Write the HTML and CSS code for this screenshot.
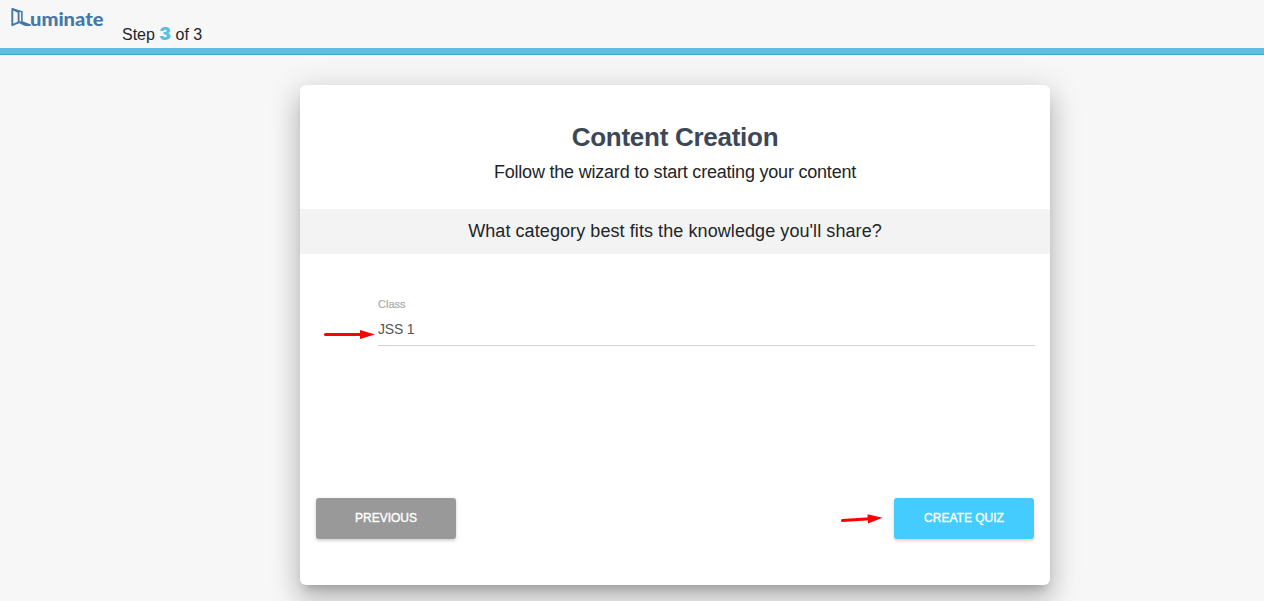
FILE: index.html
```html
<!DOCTYPE html>
<html lang="en">
<head>
<meta charset="utf-8">
<title>Content Creation</title>
<link rel="stylesheet" href="styles.css">
</head>
<body>
<header class="topbar">
  <svg class="logo" width="104" height="36" viewBox="0 0 104 36" role="img" aria-label="Luminate">
    <g fill="none" stroke="#4478a8" stroke-linejoin="round">
      <path stroke-width="1.9" d="M12.3 8.9V25.2L18.6 22.4V12.2Z"/>
      <path stroke-width="1.6" d="M12.4 8.9L21.9 11.7V22"/>
      <path stroke-width="1.9" d="M18.6 22.2L24 22.8L30 25.1H25.5L20.5 22.8"/>
    </g>
    <text class="logo-text" x="30" y="26" textLength="73.5" lengthAdjust="spacingAndGlyphs">uminate</text>
  </svg>
  <p class="step">Step <strong class="step-number">3</strong> of 3</p>
</header>
<main class="page">
  <section class="card">
    <header class="heading">
      <h1 class="title">Content Creation</h1>
      <p class="subtitle">Follow the wizard to start creating your content</p>
    </header>
    <h2 class="question">What category best fits the knowledge you'll share?</h2>
    <div class="field">
      <span class="label">Class</span>
      <span class="value">JSS 1</span>
      <svg class="arrow arrow-field" width="54" height="12" viewBox="0 0 54 12">
        <path d="M3.5 5.5H40" stroke="#f00" stroke-width="3" stroke-linecap="round"/>
        <path d="M38 1L53 5.5L38 10Z" fill="#f00"/>
      </svg>
    </div>
    <footer class="actions">
      <button class="button previous">PREVIOUS</button>
      <button class="button create">CREATE QUIZ</button>
      <svg class="arrow arrow-create" width="44" height="14" viewBox="0 0 44 14">
        <path d="M3.5 8.6L31 6.8" stroke="#f00" stroke-width="3" stroke-linecap="round"/>
        <path d="M28.5 2.3L43.5 5.7L29 11.5Z" fill="#f00"/>
      </svg>
    </footer>
  </section>
</main>
</body>
</html>
```
FILE: styles.css
```css
* { box-sizing: border-box; }
body {
  margin: 0;
  height: 601px;
  overflow: hidden;
  background: #f7f7f7;
  font-family: "Liberation Sans", Arial, sans-serif;
  color: #212529;
}
h1, h2, p { margin: 0; }
.topbar {
  display: flex;
  height: 55px;
  border-bottom: 1px solid #46a6c6;
  background: linear-gradient(#f7f7f7 48px, #5bc0de 48px);
}
.logo { flex: none; }
.logo-text {
  font-family: Lato, sans-serif;
  font-weight: 900;
  font-size: 18.5px;
  fill: #4478a8;
}
.step { padding: 25px 0 0 18px; font-size: 16px; line-height: 20px; }
.step-number { font-family: Inter, sans-serif; font-size: 17.5px; font-weight: 900; line-height: 1; color: #5bc0de; }
.page { display: flex; padding: 30px 0 0 300px; }
.card {
  display: flex;
  flex-direction: column;
  width: 750px;
  height: 500px;
  border-radius: 6px;
  background: #fff;
  box-shadow: 0 16px 24px 2px rgba(0, 0, 0, .14), 0 6px 30px 5px rgba(0, 0, 0, .12), 0 8px 10px -5px rgba(0, 0, 0, .2);
}
.heading { height: 124px; padding-top: 34px; text-align: center; }
.title { font-size: 26px; line-height: 36px; letter-spacing: -.27px; color: #3c4858; }
.subtitle { padding-top: 6px; font-size: 18px; line-height: 22px; letter-spacing: -.21px; }
.question {
  height: 45px;
  background: #f3f3f3;
  text-align: center;
  font-size: 18px;
  font-weight: 400;
  line-height: 44px;
  letter-spacing: .08px;
}
.field {
  position: relative;
  display: flex;
  flex-direction: column;
  height: 92px;
  margin: 0 15px 0 78px;
  padding-top: 42px;
  border-bottom: 1px solid #d2d2d2;
}
.label { font-size: 11px; line-height: 16px; color: #aaa; -webkit-text-stroke: .2px #aaa; }
.value { padding-top: 7px; font-size: 14px; line-height: 20px; letter-spacing: -.2px; color: #555; }
.actions {
  position: relative;
  display: flex;
  justify-content: space-between;
  margin-top: auto;
  padding: 0 16px 46px;
}
.button {
  width: 140px;
  height: 41px;
  padding: 0 0 1px;
  border: 0;
  border-radius: 3px;
  color: #fff;
  font: 12px "Liberation Sans", Arial, sans-serif;
  -webkit-text-stroke: .35px #fff;
}
.previous { background: #999; box-shadow: 0 2px 2px rgba(153, 153, 153, .25), 0 1px 4px rgba(153, 153, 153, .25); }
.create { background: #4cf; box-shadow: 0 2px 2px rgba(244, 67, 54, .18), 0 1px 4px rgba(244, 67, 54, .16); }
.arrow { position: absolute; }
.arrow-field { left: -56px; top: 75px; }
.arrow-create { left: 539px; top: 14px; }
```
